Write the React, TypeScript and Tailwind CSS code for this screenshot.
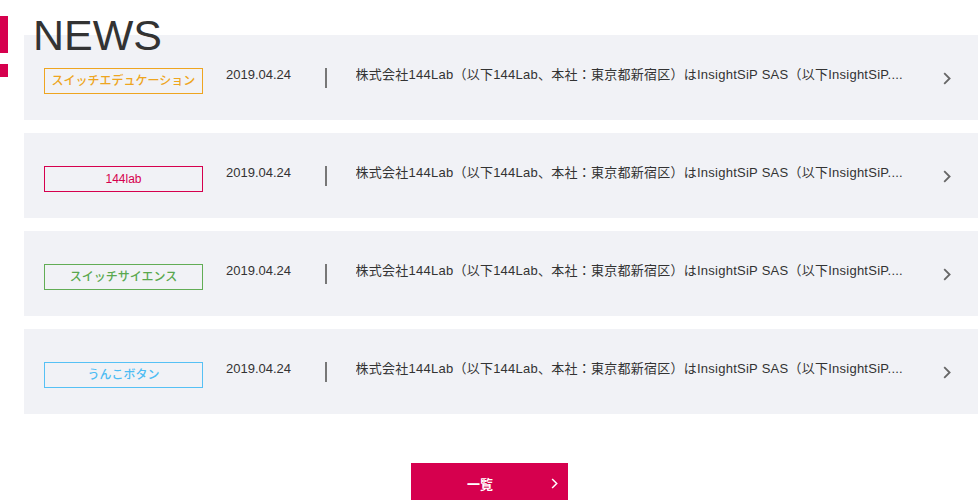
const news = [
  { tag: 'スイッチエデュケーション', color: 'border-[#eea520] text-[#eea520]', bold: true },
  { tag: '144lab', color: 'border-[#d6004e] text-[#d6004e]', bold: false },
  { tag: 'スイッチサイエンス', color: 'border-[#62ad55] text-[#5aa84f]', bold: true },
  { tag: 'うんこボタン', color: 'border-[#56c1f5] text-[#4dbcf3]', bold: true },
];

function Chevron({ className }: { className?: string }) {
  return (
    <svg width="8" height="13" viewBox="0 0 8 13" fill="none" className={className}>
      <path d="M1.2 1.2 L6.6 6.5 L1.2 11.8" stroke="currentColor" strokeWidth="1.8" />
    </svg>
  );
}

function NewsRow({ tag, color, bold }: { tag: string; color: string; bold: boolean }) {
  return (
    <div className="flex h-[85px] items-start bg-[#f1f2f6] pl-5 pt-[33px]">
      <div
        className={`flex h-[26px] w-[159px] shrink-0 items-center justify-center border text-[12px] ${color} ${bold ? 'font-medium' : ''}`}
      >
        {tag}
      </div>
      <div className="ml-[23px] mt-[-3px] w-[99px] shrink-0 text-[13px] leading-5 text-[#333]">2019.04.24</div>
      <div className="mt-0 h-5 w-[1.5px] shrink-0 bg-[#777]" />
      <div className="ml-[29px] mt-[-3px] w-[560px] shrink-0 truncate text-[13px] leading-5 tracking-[0.25px] text-[#333]">
        株式会社144Lab（以下144Lab、本社：東京都新宿区）はInsightSiP SAS（以下InsightSiP....
      </div>
      <Chevron className="ml-[27px] mt-[4px] shrink-0 text-[#666]" />
    </div>
  );
}

export default function App() {
  return (
    <div
      className="relative min-h-screen overflow-hidden bg-white"
      style={{ fontFamily: '"Liberation Sans", "Noto Sans CJK JP", sans-serif' }}
    >
      <div className="relative z-10 flex items-start pt-4">
        <div className="flex w-2 flex-col gap-[11px]">
          <div className="h-[37px] bg-[#d6004e]" />
          <div className="h-[13px] bg-[#d6004e]" />
        </div>
        <h1 className="ml-[25px] mt-[-4px] text-[43px] leading-[46px] text-[#333]">NEWS</h1>
      </div>
      <div className="ml-6 mt-[-42px] flex w-[960px] flex-col gap-[13px]">
        {news.map((n) => (
          <NewsRow key={n.tag} {...n} />
        ))}
      </div>
      <div className="mt-[49px] flex justify-center">
        <button className="ml-[1px] flex h-[50px] w-[157px] items-start bg-[#d6004e] pt-[12px] text-white">
          <span className="ml-[56px] text-[13px] font-bold leading-5">一覧</span>
          <Chevron className="ml-[58px] mt-[3px] h-[11px] w-[7px]" />
        </button>
      </div>
    </div>
  );
}
